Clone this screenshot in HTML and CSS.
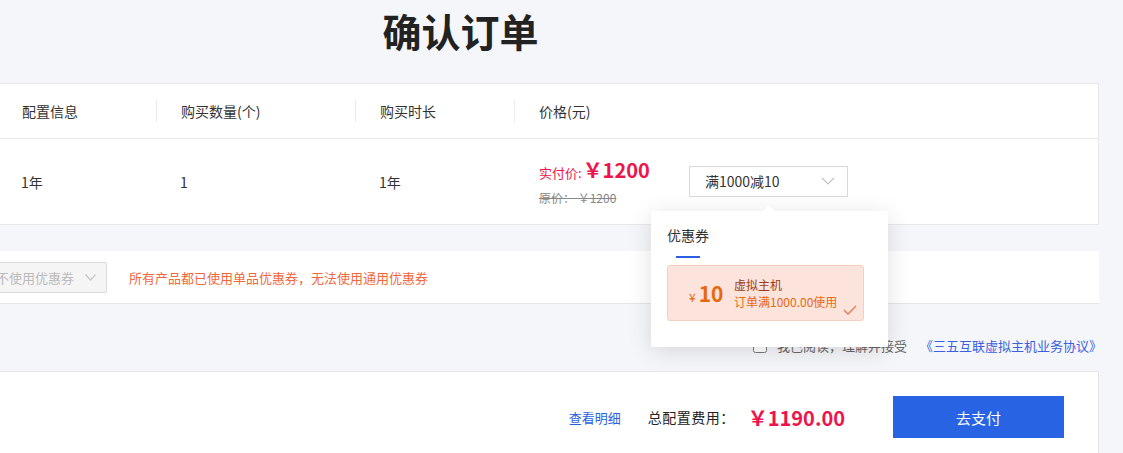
FILE: index.html
```
<!DOCTYPE html>
<html lang="zh-CN">
<head>
  <meta charset="UTF-8" />
  <meta name="viewport" content="width=device-width, initial-scale=1.0" />
  <title>确认订单</title>
  <link rel="stylesheet" href="styles.css">
</head>
<body>
  <div class="page">
    <h1 class="title">确认订单</h1>

    <div class="order-table">
      <div class="row head">
        <div class="cell"></div>
        <div class="cell sep">配置信息</div>
        <div class="cell sep">购买数量(个)</div>
        <div class="cell sep">购买时长</div>
        <div class="cell sep">价格(元)</div>
      </div>
      <div class="row body">
        <div class="cell"></div>
        <div class="cell">1年</div>
        <div class="cell">1</div>
        <div class="cell">1年</div>
        <div class="cell price-cell">
          <div class="price">
            <div class="real"><span class="real-label">实付价:</span><span class="real-num">￥1200</span></div>
            <div class="origin">原价： ￥1200</div>
          </div>
          <div class="coupon-select">
            <span>满1000减10</span>
            <svg class="chevron" width="14" height="8" viewBox="0 0 14 8"><polyline points="1,1 7,7 13,1" fill="none" stroke="#c4c4c4" stroke-width="1.2"/></svg>

            <!-- 优惠券弹层 -->
            <div class="popover">
              <div class="tab">优惠券</div>
              <div class="coupon">
                <div class="amount"><span class="yen">¥</span>10</div>
                <div class="info">
                  <div class="name">虚拟主机</div>
                  <div class="rule">订单满1000.00使用</div>
                </div>
                <svg class="check" width="14" height="10" viewBox="0 0 14 10"><polyline points="1,5 5,9 13,1" fill="none" stroke="#e07a55" stroke-width="1.3"/></svg>
              </div>
            </div>
          </div>
        </div>
      </div>
    </div>

    <div class="coupon-bar">
      <div class="select disabled">
        <span>不使用优惠券</span>
        <svg class="chevron" width="11" height="7" viewBox="0 0 11 7"><polyline points="0.5,0.5 5.5,6 10.5,0.5" fill="none" stroke="#c4c4c4" stroke-width="1.2"/></svg>
      </div>
      <div class="warn">所有产品都已使用单品优惠券，无法使用通用优惠券</div>
    </div>

    <div class="agree">
      <label><input type="checkbox" class="box" /> 我已阅读，理解并接受</label>
      <a href="#">《三五互联虚拟主机业务协议》</a>
    </div>

    <div class="pay-bar">
      <a href="#" class="detail">查看明细</a>
      <span class="total-label">总配置费用：</span>
      <span class="total">￥1190.00</span>
      <button class="pay">去支付</button>
    </div>
  </div>
</body>
</html>
```

FILE: styles.css
```
body {
  margin: 0;
  background: #f5f6fa;
  color: #333;
  font-family: "Noto Sans CJK SC", "Liberation Sans", sans-serif;
  font-size: 14px;
  overflow: hidden;
}

.page {
  width: 1281px;
  margin-left: -182px;
}

.title {
  margin: 0;
  padding: 11px 0 34px 4px;
  line-height: 38px;
  font-size: 39px;
  font-weight: bold;
  text-align: center;
  color: #222;
}

.order-table {
  background: white;
  border: 1px solid #e8e8e8;
}

.row {
  display: grid;
  grid-template-columns: 178px 159px 199px 159px 1fr;
  align-items: center;
}

.head {
  height: 54px;
  border-bottom: 1px solid #e8e8e8;
}

.body {
  height: 85px;
}

.cell {
  padding-left: 24px;
}

.sep {
  border-left: 1px solid #ececec;
  line-height: 22px;
}

.price-cell {
  display: flex;
  align-items: center;
  margin-top: 2px;
  padding-left: 25px;
}

.price {
  width: 150px;
}

.real {
  color: #f0134b;
  line-height: 24px;
}

.real-label {
  font-size: 13px;
}

.real-num {
  font-size: 20px;
  font-weight: bold;
  margin-left: 1px;
}

.origin {
  font-size: 12px;
  color: #888;
  text-decoration: line-through;
  line-height: 20px;
  margin-top: 3px;
}

.coupon-select,
.select {
  position: relative;
  display: flex;
  align-items: center;
  justify-content: space-between;
  box-sizing: border-box;
  height: 31px;
  padding: 0 12px 0 15px;
  border: 1px solid #d9d9d9;
  background: white;
}

.coupon-select {
  width: 159px;
  margin-top: -3px;
}

.popover {
  position: absolute;
  left: -39px;
  top: 44px;
  width: 237px;
  height: 136px;
  box-sizing: border-box;
  padding: 13px 16px 0;
  background: white;
  border-radius: 2px;
  box-shadow: 0 4px 24px rgba(0,0,0,0.13);
  z-index: 5;
}

.popover::before {
  content: "";
  position: absolute;
  top: -6px;
  left: 112px;
  border: 6px solid transparent;
  border-top: 0;
  border-bottom-color: white;
}

.tab {
  display: inline-block;
  position: relative;
  line-height: 22px;
  color: #333;
}

.tab::after {
  content: "";
  position: absolute;
  left: 9px;
  right: 9px;
  bottom: -12px;
  height: 2px;
  background: #2b5fe0;
}

.coupon {
  position: relative;
  display: flex;
  align-items: center;
  box-sizing: border-box;
  width: 197px;
  height: 56px;
  margin-top: 19px;
  padding-left: 21px;
  background: #fce4dc;
  border: 1px solid #f3d0be;
  border-radius: 3px;
}

.amount {
  font-size: 21px;
  font-weight: bold;
  color: #e8680f;
  width: 45px;
}

.yen {
  font-size: 12px;
  font-weight: normal;
  margin-right: 3px;
}

.info {
  font-size: 12px;
  line-height: 17px;
}

.name {
  color: #9a3a16;
}

.rule {
  color: #e8680f;
}

.check {
  position: absolute;
  right: 6px;
  bottom: 5px;
}

.coupon-bar {
  display: flex;
  align-items: center;
  height: 52px;
  margin-top: 26px;
  padding-left: 165px;
  background: white;
  border-bottom: 1px solid #e6e6e6;
}

.select.disabled {
  width: 124px;
  padding-left: 12px;
  padding-right: 10px;
  font-size: 13px;
  background: #f5f5f5;
  color: #bbb;
  border-radius: 2px;
}

.warn {
  margin-left: 22px;
  font-size: 13px;
  color: #f2683a;
}

.agree {
  display: flex;
  justify-content: flex-end;
  align-items: center;
  height: 67px;
  padding: 16px 0 0 0;
  box-sizing: border-box;
  font-size: 13px;
  color: #666;
}

.agree label {
  display: flex;
  align-items: center;
}

.box {
  width: 14px;
  height: 14px;
  margin: 0 10px 0 0;
}

.agree a {
  margin: 0 -3px 0 13px;
  color: #3a5fe0;
  text-decoration: none;
}

.pay-bar {
  display: flex;
  justify-content: flex-end;
  align-items: center;
  height: 120px;
  padding: 0 34px 28px 0;
  box-sizing: border-box;
  background: white;
  border: 1px solid #e6e6e6;
}

.detail {
  font-size: 13px;
  color: #2b5fe0;
  text-decoration: none;
}

.total-label {
  margin-left: 27px;
  color: #222;
  letter-spacing: 0.5px;
}

.total {
  margin-left: 13px;
  font-size: 20px;
  font-weight: bold;
  color: #f0134b;
}

.pay {
  width: 171px;
  height: 42px;
  margin-left: 48px;
  background: #2763e2;
  color: white;
  border: none;
  font-family: inherit;
  font-size: 15px;
  cursor: pointer;
}
```
